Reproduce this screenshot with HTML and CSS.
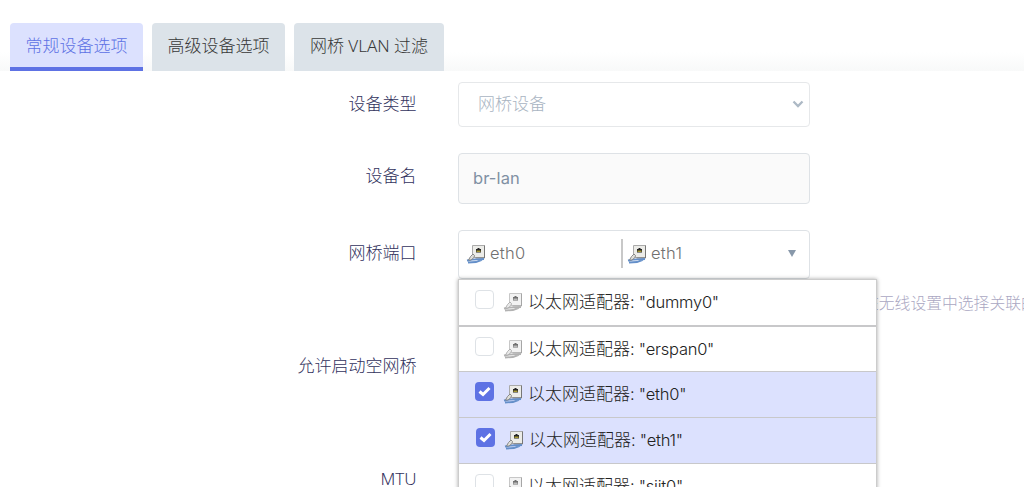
FILE: index.html
```
<!DOCTYPE html>
<html lang="zh-CN">
<head>
<meta charset="utf-8">
<title>网桥设备</title>
<link rel="stylesheet" href="styles.css">
</head>
<body>
<svg class="defs" width="0" height="0">
  <symbol id="port" viewBox="0 0 20 20">
    <path class="face" d="M6.500 1.500h12v12h-12z"/>
    <path class="edge" d="M18.500 1.500v12.500h-9"/>
    <path class="jack" d="M10 8.500v-3.500h1.500v-1h2v1h1.500v3.500z"/>
    <path class="pins" d="M10.500 6.500h4v1.500h-4z"/>
    <path class="cable" d="M1 16.500l5-.8 12-.7M2 18.500l8-.5 6-2"/>
    <path class="plug" d="M2.500 16l2-3.500 2.500-2.500 1.500 1.500-.5 2-3 2.500z"/>
  </symbol>
</svg>
<nav class="tabs">
  <a class="tab active">常规设备选项</a>
  <a class="tab">高级设备选项</a>
  <a class="tab vlan">网桥 VLAN 过滤</a>
</nav>
<main class="form">
  <div class="row type">
    <label class="label">设备类型</label>
    <div class="box select"><span>网桥设备</span>
      <svg width="12" height="9" viewBox="0 0 12 9"><path d="M1.500 1.500L6 6l4.500-4.500"/></svg>
    </div>
  </div>
  <div class="row name">
    <label class="label">设备名</label>
    <div class="box input"><span class="lat">br-lan</span></div>
  </div>
  <div class="row ports">
    <label class="label">网桥端口</label>
    <div class="field">
      <div class="box dropdown">
        <span class="chosen"><svg class="port"><use href="#port"/></svg><span class="lat">eth0</span></span>
        <span class="chosen second"><svg class="port"><use href="#port"/></svg><span class="lat">eth1</span></span>
        <i class="arrow"></i>
      </div>
      <p class="help">在无线设置中选择关联的</p>
      <ul class="menu">
        <li class="item first"><i class="check"></i><svg class="port"><use href="#port"/></svg><span>以太网适配器<b class="lat">: "dummy0"</b></span></li>
        <li class="item"><i class="check"></i><svg class="port"><use href="#port"/></svg><span>以太网适配器<b class="lat">: "erspan0"</b></span></li>
        <li class="item on"><i class="check"><svg viewBox="0 0 19 19"><path d="M4.500 9.500l3.500 3L14.500 6"/></svg></i><svg class="port"><use href="#port"/></svg><span>以太网适配器<b class="lat">: "eth0"</b></span></li>
        <li class="item on focus"><i class="check"><svg viewBox="0 0 19 19"><path d="M4.500 9.500l3.500 3L14.500 6"/></svg></i><svg class="port"><use href="#port"/></svg><span>以太网适配器<b class="lat">: "eth1"</b></span></li>
        <li class="item"><i class="check"></i><svg class="port"><use href="#port"/></svg><span>以太网适配器<b class="lat">: "siit0"</b></span></li>
      </ul>
    </div>
  </div>
  <div class="row empty"><label class="label">允许启动空网桥</label></div>
  <div class="row mtu"><label class="label">MTU</label></div>
</main>
</body>
</html>
```
FILE: styles.css
```
* { box-sizing: border-box; }
html, body { height: 487px; overflow: hidden; }
body {
  margin: 0;
  background: #fff;
  font: 300 17px/24px "Noto Sans", "Noto Sans CJK SC", sans-serif;
  color: #32325d;
}
.defs { position: absolute; }
.tabs {
  display: flex;
  gap: 9px;
  height: 71px;
  padding: 23px 10px 0;
  background: linear-gradient(#fff 52px, #f8f9f9);
}
.tab {
  height: 48px;
  width: 133px;
  padding-top: 11px;
  text-align: center;
  white-space: nowrap;
  background: #dce3e9;
  border-radius: 4px 4px 0 0;
  color: #383838;
}
.vlan { width: 150px; }
.active {
  background: #dce1fe;
  color: #5e72e4;
  border-bottom: 4px solid #5e72e4;
}
.form { display: flex; flex-direction: column; padding-top: 11px; }
.row { display: flex; gap: 41.5px; flex: none; }
.label { width: 416.5px; text-align: right; flex: none; }
.type { height: 71px; }
.type .label { padding-top: 10px; }
.name { height: 77px; }
.name .label { padding-top: 11px; }
.ports { height: 124px; }
.ports .label { padding-top: 11px; }
.empty { height: 112px; }
.mtu .label { padding-top: 1px; }
.box {
  display: flex;
  align-items: center;
  width: 352px;
  border: 1px solid #dee2e6;
  border-radius: 4px;
}
.select {
  height: 45px;
  padding: 0 5px 1px 19px;
  justify-content: space-between;
  border-color: #e6e8ea;
  color: #a9b4c2;
}
.select path { fill: none; stroke: #adb9c5; stroke-width: 2.3; }
.input { height: 51px; padding: 0 14px 2px; background: #fafafa; color: #8090a3; }
.lat { font-family: Inter, "Open Sans", sans-serif; font-size: 16.500px; font-weight: 300; letter-spacing: -.25px; }
.input .lat { font-weight: 400; letter-spacing: .1px; }
.field { position: relative; width: 566px; }
.dropdown { height: 49px; padding: 0 13px 2px 7px; color: #707070; }
.dropdown .lat { letter-spacing: .3px; margin-top: -1px; }
.chosen { display: flex; align-items: center; width: 155px; height: 29px; gap: 4px; }
.second { width: 154px; border-left: 2px solid #c8c8c8; padding-left: 4px; }
.port { width: 20px; height: 20px; flex: none; }
.face { fill: #ecece8; stroke: #aaa; }
.edge { fill: none; stroke: #777; }
.jack { fill: #252525; }
.pins { fill: #aa9d35; }
.cable { fill: none; stroke: #648fc9; stroke-width: 1.8; }
.plug { fill: #deded9; stroke: #888; }
.arrow {
  margin-left: auto;
  border: 4px solid transparent;
  border-top: 7px solid #8898aa;
  border-bottom: 0;
}
.help {
  margin: 12px 0 0;
  padding-left: 405px;
  font-size: 15.8px;
  white-space: nowrap;
  color: #aaa7c2;
}
.menu {
  position: absolute;
  left: 0;
  top: 49px;
  width: 419px;
  margin: 0;
  padding: 0;
  list-style: none;
  background: #fff;
  border: 1px solid #ccc;
  box-shadow: 0 0 4px rgba(0, 0, 0, .35);
  color: #222;
}
.item {
  display: flex;
  align-items: center;
  height: 46px;
  padding: 0 0 1px 16px;
  border-bottom: 1px solid #c8c8ca;
}
.item.first { height: 47px; border-bottom-width: 2px; }
.item:nth-child(2) { height: 45px; padding-bottom: 1px; }
.on { background: #dce1fe; }
.focus { padding-left: 17px; }
.check {
  width: 19px;
  height: 19px;
  margin: -5px 9px 0 0;
  border: 1px solid #dee2e6;
  border-radius: 4px;
  background: #fff;
}
.on .check { border: 0; background: #5e72e4; }
.check svg { display: block; }
.check path { fill: none; stroke: #fff; stroke-width: 3; }
.item .port { margin-right: 5px; }
.item:not(.on) .port { filter: grayscale(1); opacity: .65; }
```
